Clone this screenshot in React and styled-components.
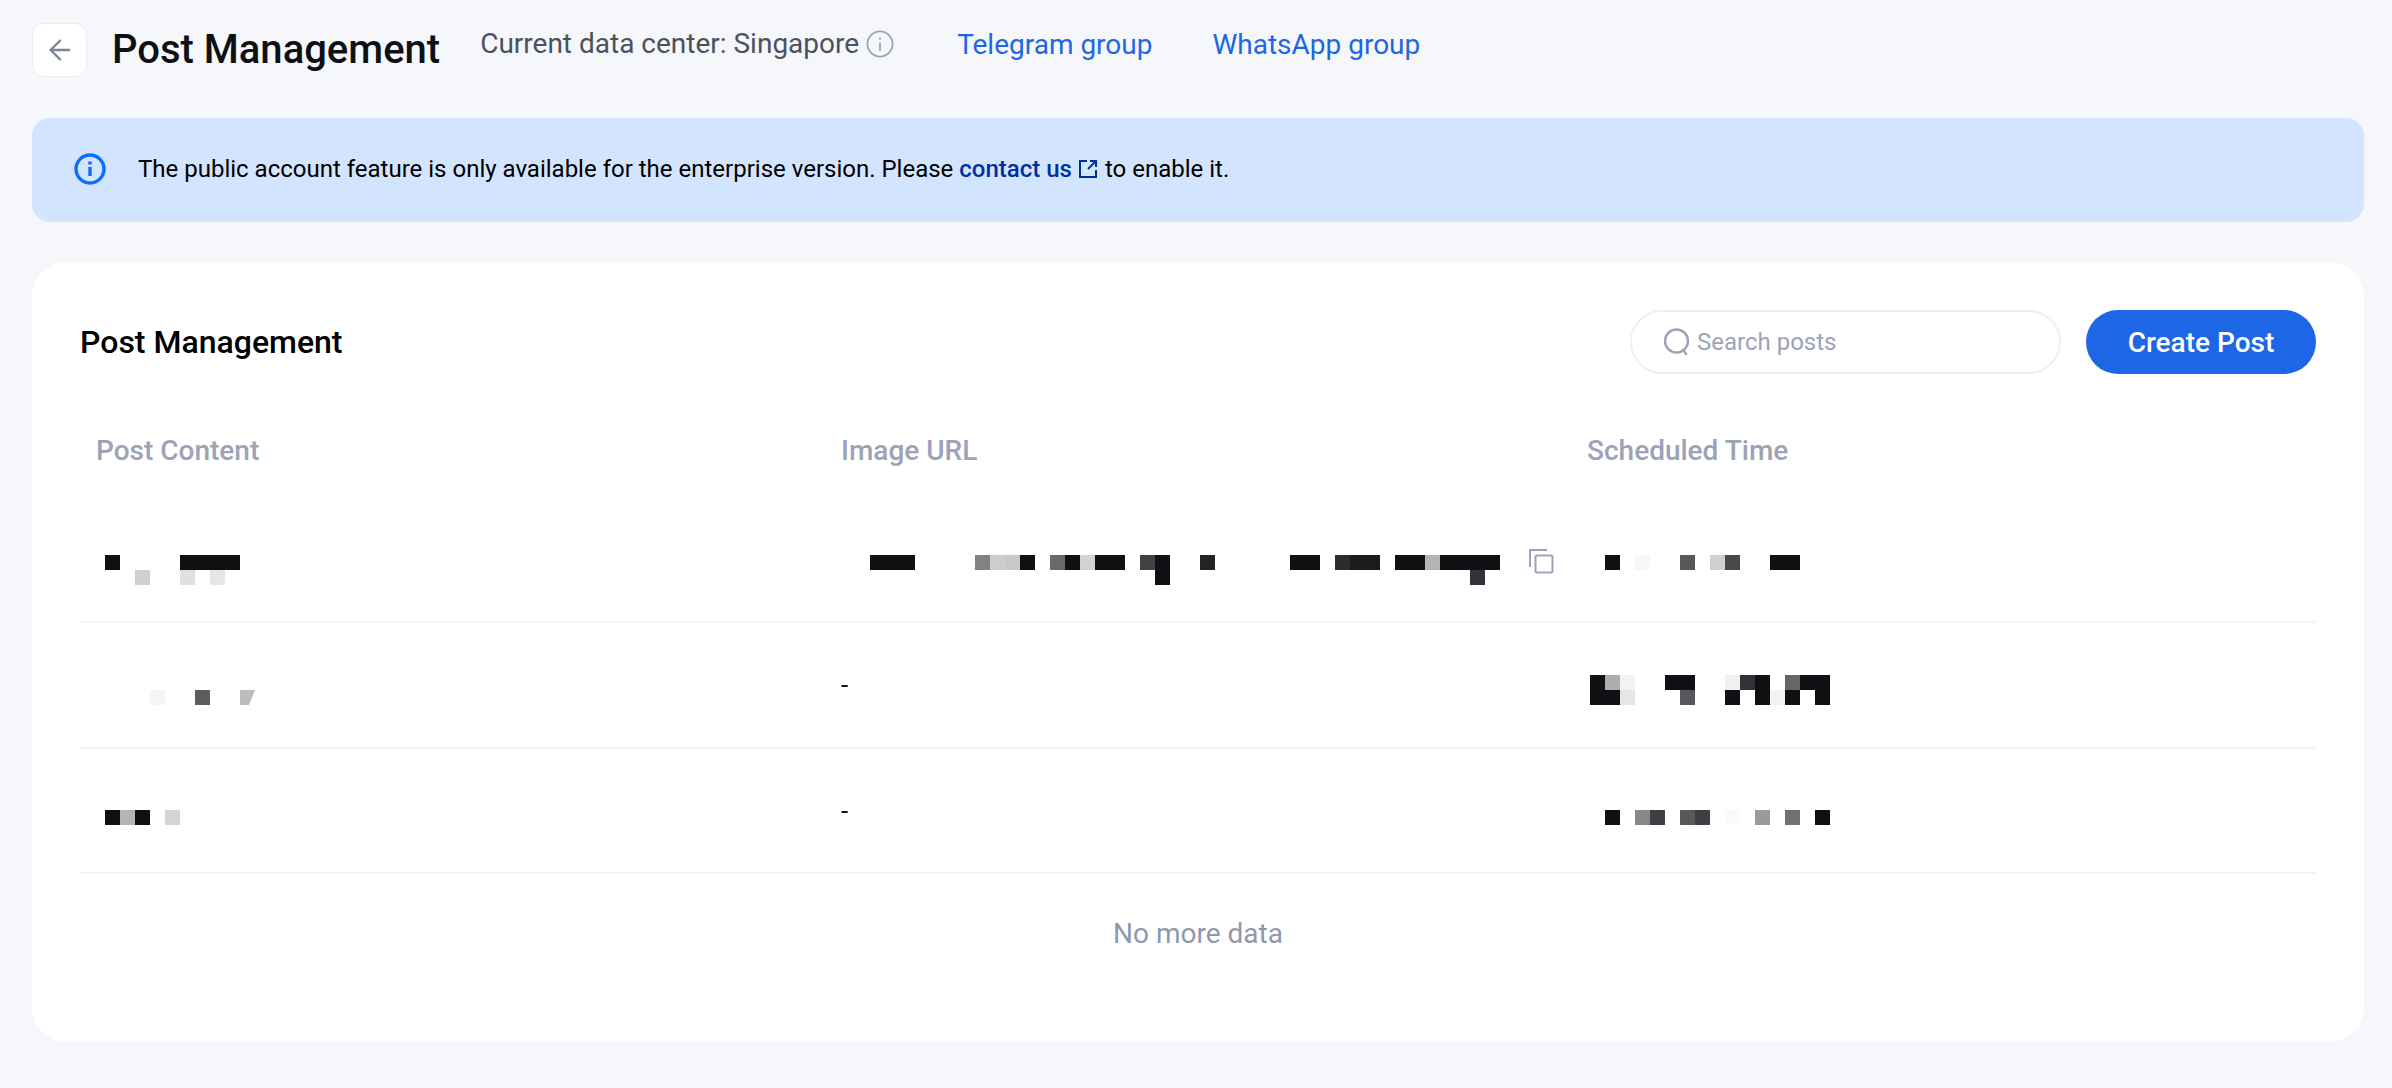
import styled, { createGlobalStyle } from "styled-components";
import { ArrowLeft } from "lucide-react";

const k = "#0f1014";
const cut = "#bdbdbe";
const _ = "";

// blurred-out cell values, one array per 15px line of blocks
const postOne = [
  [k, _, _, _, _, k, k, k, k],
  [_, _, "#d0d0d0", _, _, "#e0e0e0", _, "#e6e6e6"],
];
const postTwo = [[_, _, _, "#f5f5f5", _, _, "#5d5d60", _, _, cut]];
const postThree = [[k, "#b4b5b6", k, _, "#d4d4d4"]];
const urlOne = [
  [k, k, k, _, _, _, _, "#828282", "#cdcdcd", "#c8c8c8", k, _, "#68696b", k, "#d2d2d2", k, k, _, "#404145", k, _, _, "#232327", _, _, _, _, _, k, k, _, "#2b2c30", "#1b1c20", "#1b1c20", _, k, k, "#b4b4b4", k, k, k, k],
  [_, _, _, _, _, _, _, _, _, _, _, _, _, _, _, _, _, _, _, k, _, _, _, _, _, _, _, _, _, _, _, _, _, _, _, _, _, _, _, _, "#333238"],
];
const timeOne = [[k, _, "#f7f7f7", _, _, "#58585c", _, "#d0d0d0", "#48494d", _, _, k, k]];
const timeTwo = [
  [k, "#acacac", "#f2f2f2", _, _, k, k, _, _, "#f0f0f0", "#333238", k, _, "#666668", k, k],
  [k, k, "#e6e6e6", _, _, _, "#58585c", _, _, k, _, k, "#f2f2f2", k, _, k],
];
const timeThree = [[k, _, "#88888a", "#3e3f44", _, "#58585c", "#3e3f44", _, "#fafafa", _, "#9a9a9b", _, "#707072", _, k]];

const GlobalStyle = createGlobalStyle`
  html, body {
    margin: 0;
    padding: 0;
    background: #f5f7fb;
  }
  body {
    font-family: Roboto, "Liberation Sans", sans-serif;
    color: #0f1014;
  }
`;

const Page = styled.div`
  box-sizing: border-box;
  min-height: 1088px;
  padding: 23px 28px 46px 32px;
`;

const TopBar = styled.header`
  display: flex;
  align-items: flex-start;
  height: 54px;
  margin-bottom: 41px;
`;

const BackButton = styled.button`
  box-sizing: border-box;
  width: 55px;
  height: 54px;
  padding: 0;
  display: flex;
  align-items: center;
  justify-content: center;
  background: #fff;
  border: 1px solid #e9ecf3;
  border-radius: 12px;
  color: #7b849b;
`;

const PageTitle = styled.h1`
  margin: 2px 40px 0 25px;
  font-size: 40px;
  line-height: 50px;
  font-weight: 500;
`;

const CenterInfo = styled.span`
  display: flex;
  align-items: center;
  gap: 7px;
  margin-right: 63px;
  font-size: 28px;
  line-height: 42px;
  color: #4c5160;
`;

const GroupLink = styled.a`
  margin-right: 60px;
  font-size: 28px;
  line-height: 44px;
  color: #1d67e6;
  text-decoration: none;
`;

const Notice = styled.div`
  box-sizing: border-box;
  display: flex;
  align-items: center;
  gap: 32px;
  height: 104px;
  padding: 0 0 3px 42px;
  margin-bottom: 40px;
  background: #d3e5fe;
  border-radius: 18px;
  font-size: 24px;
  color: #000;
`;

const NoticeLink = styled.a`
  font-weight: 500;
  color: #00309e;
  text-decoration: none;
`;

const LinkIcon = styled.svg`
  width: 22px;
  height: 22px;
  margin: 0 6px 0 5px;
  vertical-align: -3px;
`;

const Card = styled.section`
  box-sizing: border-box;
  height: 780px;
  padding: 48px 48px 0;
  background: #fff;
  border-radius: 34px;
`;

const CardHead = styled.div`
  display: flex;
  align-items: center;
  height: 64px;
`;

const CardTitle = styled.h2`
  flex: 1;
  margin: 0;
  font-size: 32px;
  font-weight: 500;
  color: #000;
`;

const SearchBox = styled.div`
  box-sizing: border-box;
  display: flex;
  align-items: center;
  gap: 6px;
  width: 431px;
  height: 64px;
  padding-left: 31px;
  margin-right: 25px;
  border: 2px solid #edf0f7;
  border-radius: 32px;
  font-size: 24px;
  color: #9ca3b8;
`;

const PrimaryButton = styled.button`
  width: 230px;
  height: 64px;
  border: 0;
  border-radius: 32px;
  background: #1d67e6;
  color: #fff;
  font-family: inherit;
  font-size: 28px;
  font-weight: 500;
`;

const Row = styled.div`
  display: grid;
  grid-template-columns: 745px 746px 745px;
  box-sizing: border-box;
  height: ${(p) => p.$height}px;
  ${(p) => p.$line && "border-bottom: 2px solid #f3f4f6;"}
`;

const HeadCell = styled.div`
  padding: 57px 16px 0;
  font-size: 28px;
  line-height: 40px;
  font-weight: 500;
  color: #9ca3b8;
`;

const Cell = styled.div`
  display: flex;
  align-items: flex-start;
  padding-left: ${(p) => p.$left || 0}px;
  padding-top: ${(p) => p.$top}px;
`;

const Dash = styled.span`
  padding-left: 16px;
  font-size: 26px;
  line-height: 30px;
`;

const Blocks = styled.div`
  display: flex;
  flex-direction: column;
`;

const BlockLine = styled.div`
  display: flex;
  height: 15px;
`;

const Block = styled.i`
  display: block;
  width: 15px;
  height: 15px;
  background: ${(p) => p.$tone || "transparent"};
  ${(p) => p.$cut && "clip-path: polygon(0 0, 100% 0, 60% 100%, 0 100%);"}
`;

const CopyIcon = styled.svg`
  width: 26px;
  height: 26px;
  margin: -7px 0 0 28px;
`;

const EndNote = styled.div`
  padding-top: 40px;
  text-align: center;
  font-size: 28px;
  line-height: 40px;
  color: #8f98ab;
`;

const Mosaic = ({ lines }) => (
  <Blocks>
    {lines.map((line, i) => (
      <BlockLine key={i}>
        {line.map((tone, j) => (
          <Block key={j} $tone={tone} $cut={tone === cut} />
        ))}
      </BlockLine>
    ))}
  </Blocks>
);

export default function App() {
  return (
    <>
      <GlobalStyle />
      <Page>
        <TopBar>
          <BackButton aria-label="Back">
            <ArrowLeft size={32} strokeWidth={1.7} />
          </BackButton>
          <PageTitle>Post Management</PageTitle>
          <CenterInfo>
            Current data center: Singapore
            <svg width="28" height="28" viewBox="0 0 28 28" fill="none" stroke="#9ca3b8" strokeWidth="1.8">
              <circle cx="14" cy="14" r="12.6" />
              <path d="M14 12.5V21M14 7.5v2.2" />
            </svg>
          </CenterInfo>
          <GroupLink href="#">Telegram group</GroupLink>
          <GroupLink href="#">WhatsApp group</GroupLink>
        </TopBar>

        <Notice>
          <svg width="32" height="32" viewBox="0 0 32 32" fill="none" stroke="#0a6dff" strokeWidth="3.4">
            <circle cx="16" cy="16" r="14" />
            <path d="M16 14v9M16 8.5v3" />
          </svg>
          <span>
            The public account feature is only available for the enterprise version. Please{" "}
            <NoticeLink href="#">contact us</NoticeLink>
            <LinkIcon viewBox="0 0 22 22" fill="none" stroke="#00309e" strokeWidth="2">
              <path d="M10 3H3v16h16v-7M13 3h6v6M19 3l-8 8" />
            </LinkIcon>
            to enable it.
          </span>
        </Notice>

        <Card>
          <CardHead>
            <CardTitle>Post Management</CardTitle>
            <SearchBox>
              <svg width="28" height="28" viewBox="0 0 28 28" fill="none" stroke="#9ca3b8" strokeWidth="2.4">
                <circle cx="13.5" cy="13" r="11.5" />
                <path d="M20.5 22l3 5" />
              </svg>
              Search posts
            </SearchBox>
            <PrimaryButton>Create Post</PrimaryButton>
          </CardHead>

          <Row $height={124}>
            <HeadCell>Post Content</HeadCell>
            <HeadCell>Image URL</HeadCell>
            <HeadCell>Scheduled Time</HeadCell>
          </Row>

          <Row $height={125} $line>
            <Cell $left={25} $top={57}>
              <Mosaic lines={postOne} />
            </Cell>
            <Cell $left={45} $top={57}>
              <Mosaic lines={urlOne} />
              <CopyIcon viewBox="0 0 26 26" fill="none" stroke="#9ca3b8" strokeWidth="2">
                <path d="M2 19V2h17" />
                <rect x="7.5" y="7.5" width="17" height="17" rx="1.5" />
              </CopyIcon>
            </Cell>
            <Cell $left={34} $top={57}>
              <Mosaic lines={timeOne} />
            </Cell>
          </Row>

          <Row $height={126} $line>
            <Cell $left={25} $top={67}>
              <Mosaic lines={postTwo} />
            </Cell>
            <Cell $top={47}>
              <Dash>-</Dash>
            </Cell>
            <Cell $left={19} $top={52}>
              <Mosaic lines={timeTwo} />
            </Cell>
          </Row>

          <Row $height={125} $line>
            <Cell $left={25} $top={61}>
              <Mosaic lines={postThree} />
            </Cell>
            <Cell $top={47}>
              <Dash>-</Dash>
            </Cell>
            <Cell $left={34} $top={61}>
              <Mosaic lines={timeThree} />
            </Cell>
          </Row>

          <EndNote>No more data</EndNote>
        </Card>
      </Page>
    </>
  );
}
